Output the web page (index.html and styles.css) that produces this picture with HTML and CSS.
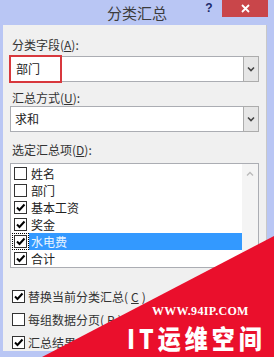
FILE: index.html
```html
<!DOCTYPE html>
<html lang="zh-CN">
<head>
  <meta charset="UTF-8" />
  <title>分类汇总</title>
  <link rel="stylesheet" href="styles.css">
</head>
<body>
  <div class="dialog">
    <div class="titlebar">
      <span></span>
      <span class="title">分类汇总</span>
      <div class="title-buttons">
        <span class="help">?</span>
        <span class="close">
          <svg width="9" height="9" viewBox="0 0 9 9"><path d="M1 1 L8 8 M8 1 L1 8" stroke="#fff" stroke-width="1.8"/></svg>
        </span>
      </div>
    </div>

    <div class="content">
      <div class="label">分类字段(<u>A</u>):</div>
      <div class="combo">
        <span class="value marked">部门</span>
        <span class="drop">
          <svg width="8" height="6" viewBox="0 0 8 6"><path d="M1 1.5 L4 4.5 L7 1.5" fill="none" stroke="#444" stroke-width="1.6"/></svg>
        </span>
      </div>

      <div class="label gap">汇总方式(<u>U</u>):</div>
      <div class="combo">
        <span class="value">求和</span>
        <span class="drop">
          <svg width="8" height="6" viewBox="0 0 8 6"><path d="M1 1.5 L4 4.5 L7 1.5" fill="none" stroke="#444" stroke-width="1.6"/></svg>
        </span>
      </div>

      <div class="label gap-lg">选定汇总项(<u>D</u>):</div>
      <div class="listbox">
        <div class="items">
          <div class="item"><span class="cb"></span><span class="text">姓名</span></div>
          <div class="item"><span class="cb"></span><span class="text">部门</span></div>
          <div class="item"><span class="cb checked"><svg viewBox="0 0 11 11"><path d="M2 5.5 L4.5 8 L9.5 2.5" fill="none" stroke="#000" stroke-width="2"/></svg></span><span class="text">基本工资</span></div>
          <div class="item"><span class="cb checked"><svg viewBox="0 0 11 11"><path d="M2 5.5 L4.5 8 L9.5 2.5" fill="none" stroke="#000" stroke-width="2"/></svg></span><span class="text">奖金</span></div>
          <div class="item selected"><span class="cb checked focus"><svg viewBox="0 0 11 11"><path d="M2 5.5 L4.5 8 L9.5 2.5" fill="none" stroke="#000" stroke-width="2"/></svg></span><span class="text">水电费</span></div>
          <div class="item"><span class="cb checked"><svg viewBox="0 0 11 11"><path d="M2 5.5 L4.5 8 L9.5 2.5" fill="none" stroke="#000" stroke-width="2"/></svg></span><span class="text">合计</span></div>
        </div>
        <div class="scrollbar">
          <svg width="8" height="6" viewBox="0 0 8 6"><path d="M1 4.5 L4 1.5 L7 4.5" fill="none" stroke="#bbb" stroke-width="1.4"/></svg>
        </div>
      </div>

      <div class="options">
        <div class="option"><span class="cb checked"><svg viewBox="0 0 11 11"><path d="M2 5.5 L4.5 8 L9.5 2.5" fill="none" stroke="#000" stroke-width="2"/></svg></span>替换当前分类汇总(<u>C</u>)</div>
        <div class="option"><span class="cb"></span>每组数据分页(<u>P</u>)</div>
        <div class="option"><span class="cb checked"><svg viewBox="0 0 11 11"><path d="M2 5.5 L4.5 8 L9.5 2.5" fill="none" stroke="#000" stroke-width="2"/></svg></span>汇总结果</div>
      </div>
    </div>

    <!-- watermark over the corner -->
    <div class="watermark">
      <div class="wm-url">WWW.94IP.COM</div>
      <div class="wm-name">IT运维空间</div>
    </div>
  </div>
</body>
</html>
```

FILE: styles.css
```css
* {
  margin: 0;
  padding: 0;
  box-sizing: border-box;
}

body {
  background: #fff;
  font-family: "Noto Sans CJK SC", "Noto Sans", sans-serif;
  font-size: 12px;
  color: #222;
}

.dialog {
  position: relative;
  width: 274px;
  height: 357px;
  background: #b9c6f4;
  overflow: hidden;
  display: flex;
  flex-direction: column;
}

.titlebar {
  height: 25px;
  display: grid;
  grid-template-columns: 1fr auto 1fr;
  align-items: start;
}

.title {
  font-size: 15px;
  line-height: 25px;
  color: #3c3c3c;
}

.title-buttons {
  display: flex;
  justify-content: flex-end;
  padding-right: 6px;
}

.help {
  width: 22px;
  text-align: center;
  font-family: "Liberation Sans", sans-serif;
  font-weight: bold;
  font-size: 12px;
  line-height: 17px;
  color: #1d2a6b;
  margin-right: 2px;
}

.close {
  width: 46px;
  height: 17px;
  background: #c9464a;
  display: flex;
  align-items: center;
  justify-content: center;
}

.content {
  flex: 1;
  background: #f0f0f0;
  margin-left: 3px;
  margin-right: 7px;
  margin-bottom: 6px;
  border-right: 1px solid #c8c8c8;
  padding: 12px 7px 0 7px;
  display: flex;
  flex-direction: column;
}

.label {
  line-height: 16px;
  padding-left: 2px;
  color: #333;
}

.label.gap {
  margin-top: 8px;
}

.label.gap-lg {
  margin-top: 10px;
}

.combo {
  margin-top: 3px;
  height: 26px;
  background: #fff;
  border: 1px solid #abadb3;
  display: flex;
  align-items: stretch;
}

.label.gap + .combo {
  margin-top: 0;
}

.value {
  flex: 1;
  line-height: 24px;
  padding-left: 4px;
}

.value.marked {
  flex: 0 0 53px;
  margin: -2px 0 -2px -2px;
  border: 2px solid #d8383d;
  line-height: 24px;
  padding-left: 5px;
}

.combo .value.marked + .drop {
  margin-left: auto;
}

.drop {
  width: 16px;
  margin: -1px -1px -1px 0;
  background: #e6e6e6;
  border: 1px solid #acacac;
  display: flex;
  align-items: center;
  justify-content: center;
}

.listbox {
  margin-top: 5px;
  height: 105px;
  background: #fff;
  border: 1px solid #abadb3;
  display: flex;
}

.items {
  flex: 1;
  padding: 1px 0 0 3px;
}

.item {
  height: 17px;
  display: flex;
  align-items: center;
}

.item .text {
  flex: 1;
  line-height: 17px;
  padding-left: 2px;
  margin-left: 2px;
}

.item.selected .text {
  background: #3399ff;
  color: #e8f4ff;
}

.cb {
  width: 13px;
  height: 13px;
  border: 1px solid #333;
  background: #fff;
  display: flex;
  align-items: center;
  justify-content: center;
  flex-shrink: 0;
}

.cb svg {
  width: 11px;
  height: 11px;
}

.cb.focus {
  outline: 1px dotted #000;
  outline-offset: 1px;
}

.scrollbar {
  width: 16px;
  background: #f4f4f4;
  display: flex;
  justify-content: center;
  padding-top: 7px;
}

.options {
  margin-top: 20px;
  display: flex;
  flex-direction: column;
  gap: 7px;
  padding-left: 2px;
}

.option {
  height: 16px;
  display: flex;
  align-items: center;
  gap: 3px;
  white-space: nowrap;
  color: #333;
}

.watermark {
  position: absolute;
  left: 0;
  top: 0;
  width: 274px;
  height: 357px;
  background: #ea0f2c;
  clip-path: polygon(274px 236px, 274px 357px, 42px 357px);
  color: #fff;
}

.wm-url {
  position: absolute;
  left: 152px;
  top: 305px;
  font-family: "Liberation Serif", serif;
  font-weight: bold;
  font-size: 12px;
  line-height: 13px;
  letter-spacing: 0.3px;
}

.wm-name {
  position: absolute;
  left: 127px;
  top: 323px;
  font-family: "Noto Sans CJK SC", sans-serif;
  font-weight: 900;
  font-size: 23px;
  line-height: 26px;
  letter-spacing: 4px;
  white-space: nowrap;
  transform: scaleY(1.15);
  transform-origin: left top;
}
```
